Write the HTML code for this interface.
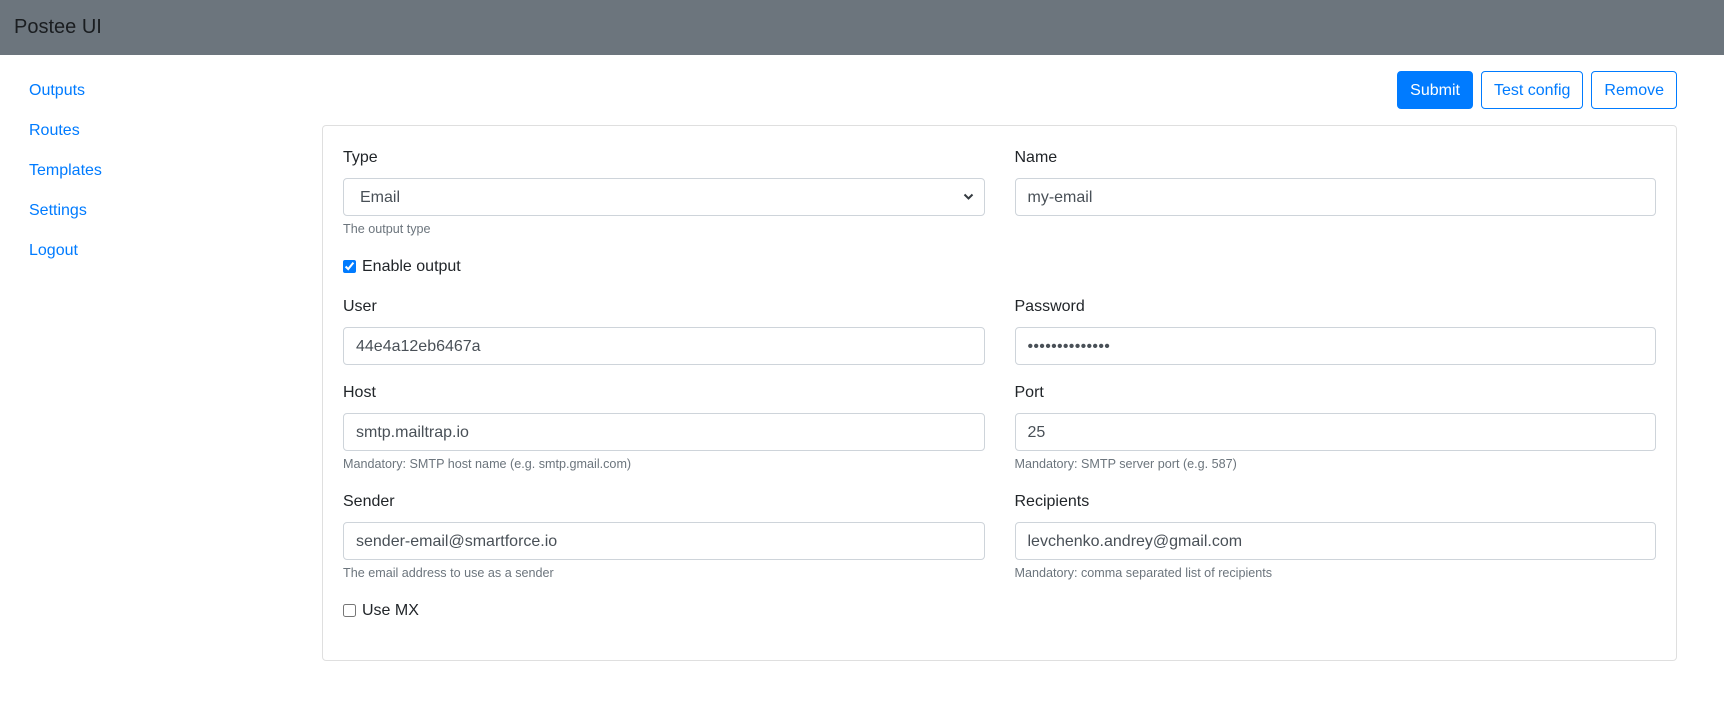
<!DOCTYPE html>
<html><head><meta charset="utf-8"><style>
*{box-sizing:border-box}
body{margin:0;width:1724px;height:710px;font-family:"Liberation Sans",sans-serif;font-size:16px;line-height:24px;color:#212529;background:#fff;overflow:hidden;position:relative}
.nav{height:55px;background:#6c757d;padding:0 14px;font-size:20px;line-height:55px;color:#1a1d20}
.side{position:absolute;left:13px;top:71px}
.side a{display:block;padding:8px 16px;color:#007bff;text-decoration:none}
.btns{position:absolute;top:71px;right:47px;display:flex;gap:8px}
.btn{height:38px;line-height:37px;padding:0 12px;border:1px solid #007bff;border-radius:4px;color:#007bff;background:#fff}
.btn.p{background:#007bff;color:#fff}
.card{position:absolute;left:322px;top:125px;width:1355px;height:536px;border:1px solid rgba(0,0,0,.125);border-radius:4px;padding:20px}
.row{display:flex;gap:30px}
.col{flex:1}
.fg{margin-bottom:16px}
label{display:block;margin-bottom:8px}
.in{height:38px;border:1px solid #ced4da;border-radius:4px;padding:7px 12px 5px;color:#495057;line-height:24px;position:relative}
.help{margin-top:4px;font-size:12.6px;line-height:19px;color:#6c757d}
.chk{display:flex;align-items:center;height:24px;margin-bottom:16px}
.chk input{margin:0 6px 2px 0;width:13px;height:13px;accent-color:#007bff}
.sel{padding-left:16px}
.sel svg{position:absolute;right:10px;top:14px}
</style></head><body>
<div class="nav">Postee UI</div>
<div class="side"><a>Outputs</a><a>Routes</a><a>Templates</a><a>Settings</a><a>Logout</a></div>
<div class="btns"><div class="btn p">Submit</div><div class="btn">Test config</div><div class="btn">Remove</div></div>
<div class="card">
<div class="row"><div class="col fg"><label>Type</label><div class="in sel">Email<svg width="11" height="8" viewBox="0 0 11 8"><path d="M1.5 1.5L5.5 5.5L9.5 1.5" stroke="#343a40" stroke-width="2" fill="none"/></svg></div><div class="help">The output type</div></div>
<div class="col fg"><label>Name</label><div class="in">my-email</div></div></div>
<div class="chk"><input type="checkbox" checked>Enable output</div>
<div class="row"><div class="col fg"><label>User</label><div class="in">44e4a12eb6467a</div></div>
<div class="col fg"><label>Password</label><div class="in" style="letter-spacing:0.3px">••••••••••••••</div></div></div>
<div class="row"><div class="col fg"><label>Host</label><div class="in">smtp.mailtrap.io</div><div class="help">Mandatory: SMTP host name (e.g. smtp.gmail.com)</div></div>
<div class="col fg"><label>Port</label><div class="in">25</div><div class="help">Mandatory: SMTP server port (e.g. 587)</div></div></div>
<div class="row"><div class="col fg"><label>Sender</label><div class="in">sender-email@smartforce.io</div><div class="help">The email address to use as a sender</div></div>
<div class="col fg"><label>Recipients</label><div class="in">levchenko.andrey@gmail.com</div><div class="help">Mandatory: comma separated list of recipients</div></div></div>
<div class="chk"><input type="checkbox">Use MX</div>
</div>
</body></html>
